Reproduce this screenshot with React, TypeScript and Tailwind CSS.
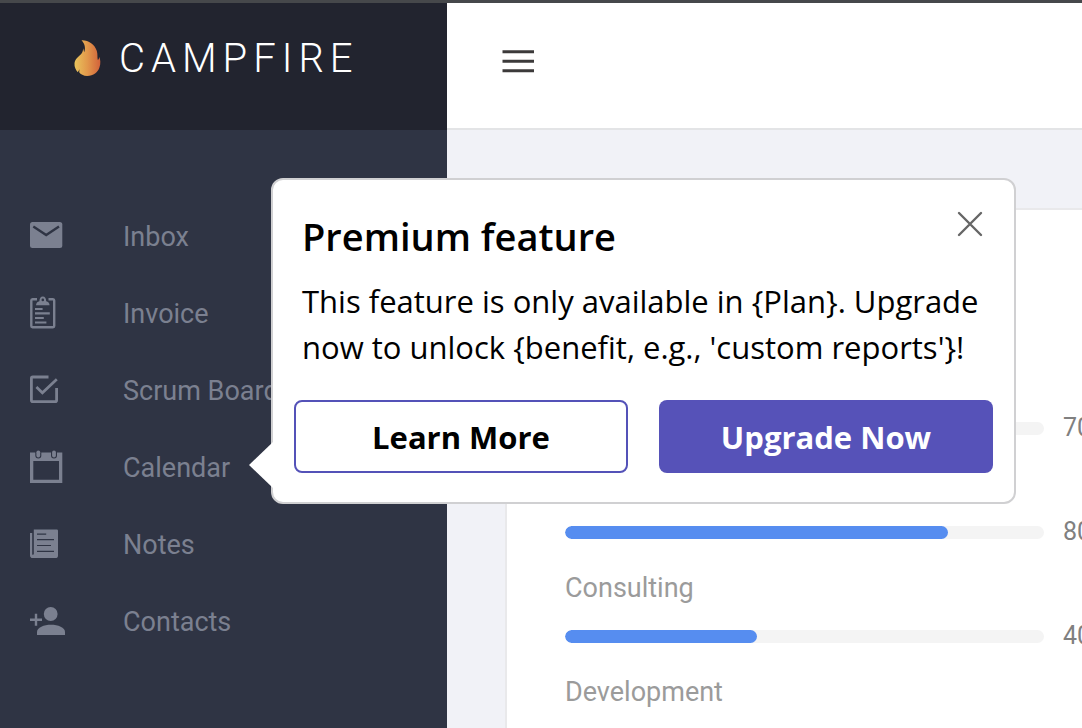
import React from "react";

type IconProps = { children: React.ReactNode };

function NavIcon({ children }: IconProps) {
  return (
    <svg aria-hidden="true" viewBox="0 0 37 37" className="h-[37px] w-[37px] shrink-0" fill="currentColor">
      {children}
    </svg>
  );
}

const navItems: { label: string; icon: React.ReactNode }[] = [
  {
    label: "Inbox",
    icon: (
      <>
        <rect x="0" y="5" width="32.3" height="26" rx="2.5" />
        <path d="M3.3 9.6 16.2 18 29 9.6" fill="none" stroke="#2f3444" strokeWidth="2.4" />
      </>
    ),
  },
  {
    label: "Invoice",
    icon: (
      <>
        <path d="M7 5.2H2.5Q1.3 5.2 1.3 6.5V32Q1.3 33.2 2.5 33.2H23Q24.2 33.2 24.2 32V6.5Q24.2 5.2 23 5.2H18.5" fill="none" stroke="currentColor" strokeWidth="2.4" />
        <path fillRule="evenodd" d="M6 11.2Q6.3 7.8 9.4 7.2 9.6 2.5 12.8 2.5 16 2.5 16.2 7.2 19.3 7.8 19.6 11.2ZM12.8 4.6A1.3 1.3 0 1 0 12.8 7.2 1.3 1.3 0 1 0 12.8 4.6Z" />
        <path d="M5 15H12.6M5 19.3H19.8M5 24H13.8M5 28.5H16.4" stroke="currentColor" strokeWidth="2.2" />
      </>
    ),
  },
  {
    label: "Scrum Board",
    icon: (
      <>
        <path d="M18.5 6H2.8Q1.4 6 1.4 7.4V29.2Q1.4 30.6 2.8 30.6H25.2Q26.6 30.6 26.6 29.2V17" fill="none" stroke="currentColor" strokeWidth="2.8" />
        <path d="M6.4 16 12.4 21.8 26.8 8.2" fill="none" stroke="currentColor" strokeWidth="2.7" />
      </>
    ),
  },
  {
    label: "Calendar",
    icon: (
      <>
        <path fillRule="evenodd" d="M0 4.5H32.3V35H0ZM3.3 13V31.8H29V13Z" />
        <rect x="5.3" y="1.2" width="6" height="9.4" rx="3" fill="#2f3444" />
        <rect x="21" y="1.2" width="6" height="9.4" rx="3" fill="#2f3444" />
        <rect x="6.4" y="2.4" width="3.8" height="7" rx="1.9" />
        <rect x="22.1" y="2.4" width="3.8" height="7" rx="1.9" />
      </>
    ),
  },
  {
    label: "Notes",
    icon: (
      <>
        <path d="M3.8 4.6H26.8Q28 4.6 28 5.8V30.4Q28 33 25.4 33H2.8Q0 33 0 30.2V8H2.2V29.6Q3.6 30.2 3.8 29Z" />
        <path d="M7 9.2H16.2M7 14.6H24M7 20.5H21M7 26.4H24" stroke="#2f3444" strokeWidth="1.2" />
      </>
    ),
  },
  {
    label: "Contacts",
    icon: (
      <>
        <circle cx="20.7" cy="12" r="6.9" />
        <path d="M7 33V30C7 25.5 14 22.8 21 22.8S35 25.5 35 30V33Z" />
        <path d="M0 17.8H12M6 11.8V23.8" stroke="currentColor" strokeWidth="2.4" />
      </>
    ),
  },
];

const progressItems = [
  { label: "", percent: 70 },
  { label: "", percent: 80 },
  { label: "Consulting", percent: 40 },
  { label: "Development", percent: 60 },
];

function Flame() {
  return (
    <svg aria-hidden="true" viewBox="72 120 80 108" className="h-9 w-[27px]">
      <defs>
        <linearGradient id="flame" x1="0" x2="1" y1="0" y2="0">
          <stop offset="0" stopColor="#e9c45c" />
          <stop offset="0.5" stopColor="#e2984b" />
          <stop offset="1" stopColor="#d2623a" />
        </linearGradient>
      </defs>
      <path
        fill="url(#flame)"
        d="M94 121C114 120 134 133 140 153C143 163 141 172 143 180C146 178 147 174 147 170C151 178 152 190 148 202C143 218 130 228 111 228C100 228 91 223 87 217L88 208L83 217C77 210 72 201 73 190C75 176 85 171 93 162C97 158 99 151 99 145L102 157C105 150 105 143 103 136C101 130 99 126 94 121Z"
      />
    </svg>
  );
}

function Sidebar() {
  return (
    <aside className="flex w-[447px] shrink-0 flex-col bg-[#2f3444]">
      <div className="flex h-[127px] items-start gap-[18px] bg-[#22242f] pt-[33px] pl-[74px]">
        <div className="pt-1">
          <Flame />
        </div>
        <span className="text-[40px] leading-[46px] font-light tracking-[6px] text-white">CAMPFIRE</span>
      </div>
      <nav className="pt-[67px]">
        <ul>
          {navItems.map((item) => (
            <li key={item.label}>
              <a href="#" className="flex h-[77px] items-center gap-14 pl-[30px] text-[27px] whitespace-nowrap text-[#7b8090]">
                <NavIcon>{item.icon}</NavIcon>
                <span className="pt-[3px]">{item.label}</span>
              </a>
            </li>
          ))}
        </ul>
      </nav>
    </aside>
  );
}

function ProgressCard() {
  return (
    <section className="mt-[78px] ml-[58px] min-w-[640px] grow border-2 border-[#e9e9eb] bg-white pt-[154px] pl-[58px]">
      {progressItems.map((item, index) => (
        <div key={index} className="flex h-[104px] flex-col justify-between pb-6">
          <span className="h-8 text-[27px] leading-8 text-[#9b9b9b]">{item.label}</span>
          <div className="flex h-8 items-center gap-[19px]">
            <div className="h-[13px] w-[479px] shrink-0 overflow-hidden rounded-full bg-[#f4f4f4]">
              <div className="h-full rounded-full bg-[#568df0]" style={{ width: `${item.percent}%` }} />
            </div>
            <span className="text-[25px] text-[#808080]">{item.percent}%</span>
          </div>
        </div>
      ))}
    </section>
  );
}

const premiumMessage =
  "This feature is only available in {Plan}. Upgrade now to unlock {benefit, e.g., 'custom reports'}!";

function PremiumPopover() {
  return (
    <div
      role="dialog"
      aria-labelledby="premium-title"
      className="absolute top-[175px] left-[271px] w-[745px] rounded-[12px] border-2 border-[#d0d0d2] bg-white px-[21px] pt-[31px] pb-[29px] font-['Open_Sans',sans-serif] text-black"
    >
      <svg aria-hidden="true" viewBox="0 0 24 46" className="absolute top-[262px] -left-6 h-[46px] w-6">
        <path d="M24 0V46L0 23Z" fill="#fff" />
      </svg>
      <div className="flex items-start justify-between pr-[10px] pl-2">
        <h2 id="premium-title" className="text-[38px] leading-[50px] font-semibold">
          Premium feature
        </h2>
        <button type="button" aria-label="Close" className="text-[#666]">
          <svg aria-hidden="true" viewBox="0 0 26 26" className="h-[26px] w-[26px]">
            <path d="M2 2 24 24M24 2 2 24" fill="none" stroke="currentColor" strokeWidth="2.4" strokeLinecap="round" />
          </svg>
        </button>
      </div>
      <p className="mt-[17px] pl-2 text-[31px] leading-[46px]">{premiumMessage}</p>
      <div className="mt-[30px] grid grid-cols-2 gap-[31px] text-[31px] leading-[46px] font-bold">
        <button type="button" className="h-[73px] rounded-lg border-2 border-[#5452b8] bg-white">
          Learn More
        </button>
        <button type="button" className="h-[73px] rounded-lg bg-[#5652b8] text-white">
          Upgrade Now
        </button>
      </div>
    </div>
  );
}

export default function App() {
  return (
    <div className="relative flex h-screen overflow-hidden border-t-[3px] border-[#46484b] bg-[#f1f2f7] font-[Roboto,sans-serif]">
      <Sidebar />
      <main className="flex min-w-0 grow flex-col">
        <header className="flex h-[127px] shrink-0 items-start border-b-2 border-[#e3e4e6] bg-white pt-[46px] pl-[55px]">
          <button type="button" aria-label="Toggle menu" className="text-[#3c3a3a]">
            <svg aria-hidden="true" viewBox="0 0 32 24" className="h-6 w-8">
              <path d="M.5 2.7H32M.5 12.2H32M.5 21.7H32" stroke="currentColor" strokeWidth="3" />
            </svg>
          </button>
        </header>
        <ProgressCard />
      </main>
      <PremiumPopover />
    </div>
  );
}
